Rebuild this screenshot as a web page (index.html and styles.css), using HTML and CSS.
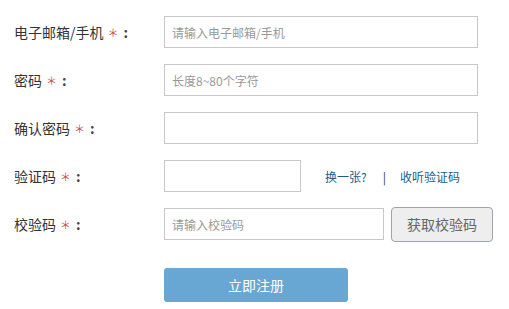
FILE: index.html
```html
<!DOCTYPE html>
<html lang="zh">
<head>
<meta charset="utf-8">
<link rel="stylesheet" href="styles.css">
</head>
<body>
<form class="form">
  <div class="row">
    <label class="label">电子邮箱/手机<span class="req">＊</span><span class="colon">:</span></label>
    <input class="input" type="text" placeholder="请输入电子邮箱/手机">
  </div>
  <div class="row">
    <label class="label">密码<span class="req">＊</span><span class="colon">:</span></label>
    <input class="input" type="password" placeholder="长度8~80个字符">
  </div>
  <div class="row">
    <label class="label">确认密码<span class="req">＊</span><span class="colon">:</span></label>
    <input class="input" type="password">
  </div>
  <div class="row">
    <label class="label">验证码<span class="req">＊</span><span class="colon">:</span></label>
    <input class="input input-captcha" type="text">
    <div class="links">
      <a class="link" href="#">换一张?</a>
      <span class="sep">|</span>
      <a class="link" href="#">收听验证码</a>
    </div>
  </div>
  <div class="row">
    <label class="label">校验码<span class="req">＊</span><span class="colon">:</span></label>
    <input class="input input-code" type="text" placeholder="请输入校验码">
    <button class="btn-code" type="button">获取校验码</button>
  </div>
  <div class="row row-submit">
    <span class="label"></span>
    <button class="btn-submit" type="button">立即注册</button>
  </div>
</form>
</body>
</html>
```
FILE: styles.css
```css
html, body {
  margin: 0;
  padding: 0;
  background: #fff;
}
body {
  font-family: "Microsoft YaHei", "Noto Sans CJK SC", "Liberation Sans", sans-serif;
  color: #333;
}
.form {
  padding-top: 16px;
  display: flex;
  flex-direction: column;
  gap: 16px;
}
.row {
  display: flex;
  align-items: center;
  height: 32px;
}
.label {
  width: 150px;
  padding-left: 14px;
  font-size: 14px;
  color: #333;
  white-space: nowrap;
  flex: none;
  display: flex;
  align-items: center;
}
.req {
  color: #c0504d;
  font-size: 11px;
  margin-left: 4px;
}
.colon {
  margin-left: 5px;
  font-weight: bold;
  color: #444;
}
.input {
  box-sizing: border-box;
  width: 314px;
  height: 32px;
  border: 1px solid #c8c8c8;
  padding: 0 7px;
  font-family: inherit;
  font-size: 12px;
  color: #333;
  outline: none;
  margin: 0;
}
.input::placeholder {
  color: #999;
}
.input-captcha {
  width: 137px;
}
.links {
  margin-left: 24px;
  display: flex;
  align-items: center;
  font-size: 12px;
}
.link {
  color: #1f5a8a;
  text-decoration: none;
}
.sep {
  color: #333;
  margin: 0 14px 0 16px;
}
.input-code {
  width: 220px;
}
.btn-code {
  box-sizing: border-box;
  margin-left: 7px;
  width: 102px;
  height: 35px;
  border: 1px solid #9aa5b0;
  border-radius: 4px;
  background: #eeeeee;
  color: #666;
  font-family: inherit;
  font-size: 14px;
  padding: 0;
}
.row-submit {
  height: 34px;
  margin-top: 12px;
}
.btn-submit {
  box-sizing: border-box;
  width: 184px;
  height: 34px;
  border: none;
  border-radius: 3px;
  background: #68a6d4;
  color: #fff;
  font-family: inherit;
  font-size: 14px;
  padding: 0;
}
```
